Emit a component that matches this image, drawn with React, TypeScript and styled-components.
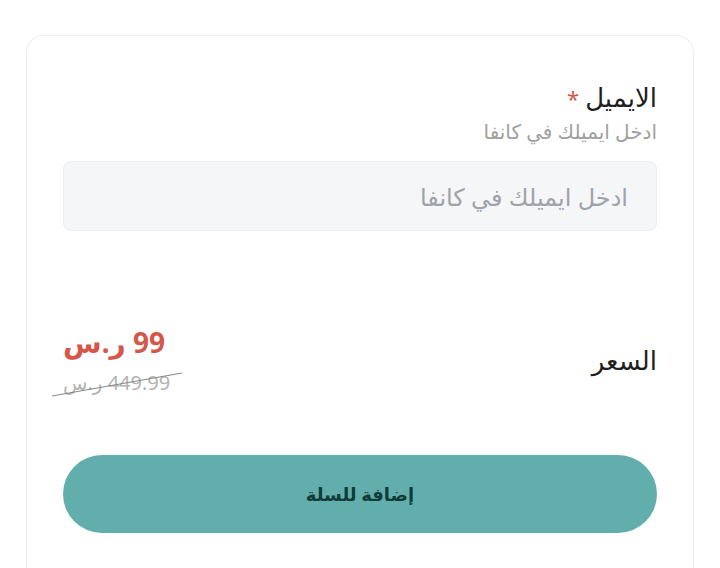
import React from 'react';
import styled, { createGlobalStyle } from 'styled-components';

const GlobalStyle = createGlobalStyle`
  html, body {
    margin: 0;
    padding: 0;
    background: #fff;
  }
  body {
    font-family: "Noto Sans", "DejaVu Sans", sans-serif;
  }
`;

const Page = styled.div`
  padding: 35px 26px 0 26px;
  direction: rtl;
`;

const Card = styled.div`
  border: 1px solid #ececec;
  border-bottom: none;
  border-radius: 18px 18px 0 0;
  padding: 46px 36px 40px 36px;
  min-height: 500px;
  box-sizing: border-box;
`;

const Label = styled.label`
  display: block;
  font-size: 26px;
  line-height: 30px;
  color: #1f1f1f;
`;

const Star = styled.span`
  color: #d4584a;
  margin-right: 6px;
  font-size: 22px;
`;

const Hint = styled.div`
  margin-top: 5px;
  font-size: 20px;
  line-height: 28px;
  color: #a0a0a0;
`;

const Input = styled.input`
  display: block;
  width: 100%;
  box-sizing: border-box;
  margin-top: 15px;
  height: 70px;
  padding: 0 28px;
  background: #f5f6f8;
  border: 1px solid #eceef1;
  border-radius: 8px;
  font-family: inherit;
  font-size: 24px;
  color: #333;
  direction: rtl;
  outline: none;
  &::placeholder {
    color: #9ea3aa;
  }
`;

const PriceRow = styled.div`
  margin-top: 93px;
  display: flex;
  justify-content: space-between;
  align-items: center;
`;

const PriceLabel = styled.div`
  font-size: 26px;
  color: #1f1f1f;
`;

const Prices = styled.div`
  display: flex;
  flex-direction: column;
  align-items: flex-end;
`;

const NewPrice = styled.div`
  font-size: 28px;
  line-height: 36px;
  font-weight: 700;
  color: #d4584a;
`;

const OldPrice = styled.div`
  position: relative;
  margin-top: 10px;
  font-size: 20px;
  line-height: 26px;
  color: #b3b3b3;
  &::after {
    content: '';
    position: absolute;
    left: -12px;
    top: 14px;
    width: 132px;
    height: 1px;
    background: #8a8a8a;
    transform: rotate(-10deg);
    transform-origin: center;
  }
`;

const Button = styled.button`
  display: block;
  width: 100%;
  margin-top: 59px;
  height: 78px;
  border: none;
  border-radius: 39px;
  background: #62aeac;
  color: #103c38;
  font-family: inherit;
  font-size: 18px;
  font-weight: 700;
  cursor: pointer;
`;

const App: React.FC = () => (
  <>
    <GlobalStyle />
    <Page>
      <Card>
        <Label>
          الايميل<Star>*</Star>
        </Label>
        <Hint>ادخل ايميلك في كانفا</Hint>
        <Input placeholder="ادخل ايميلك في كانفا" />
        <PriceRow>
          <PriceLabel>السعر</PriceLabel>
          <Prices>
            <NewPrice>99 ر.س</NewPrice>
            <OldPrice>449.99 ر.س</OldPrice>
          </Prices>
        </PriceRow>
        <Button>إضافة للسلة</Button>
      </Card>
    </Page>
  </>
);

export default App;
